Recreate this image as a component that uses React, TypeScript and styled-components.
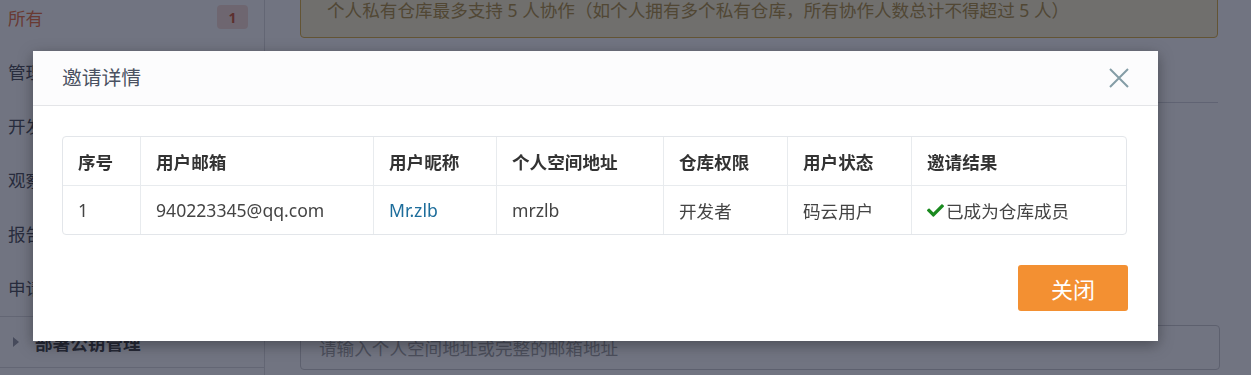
import React from "react";
import styled, { createGlobalStyle } from "styled-components";
import { FaCheck } from "react-icons/fa";

const GlobalStyle = createGlobalStyle`
  html, body { margin: 0; padding: 0; background: #ffffff; }
  body {
    font-family: "Noto Sans", "Noto Sans CJK SC", sans-serif;
    font-size: 17.6px;
    color: #333;
    overflow: hidden;
  }
  * { box-sizing: border-box; }
`;

const Page = styled.div`
  display: flex;
  width: 1251px;
  height: 375px;
  overflow: hidden;
`;

const Sidebar = styled.aside`
  width: 265px;
  flex: none;
  border-right: 1px solid #d8d8dc;
  display: flex;
  flex-direction: column;
  margin-top: -10px;
`;

const SideItem = styled.div<{ $active?: boolean }>`
  height: 54px;
  flex: none;
  display: flex;
  align-items: center;
  justify-content: space-between;
  padding: 0 16px 0 8px;
  font-size: 17.6px;
  color: ${(p) => (p.$active ? "#e8632b" : "#3a3d48")};
`;

const Badge = styled.span`
  width: 31px;
  height: 24px;
  border-radius: 4px;
  background: #f6d9d2;
  color: #c8461f;
  font-size: 14px;
  font-weight: 700;
  display: flex;
  align-items: center;
  justify-content: center;
`;

const SideSection = styled.div`
  height: 52px;
  flex: none;
  display: flex;
  align-items: center;
  gap: 16px;
  padding: 0 0 0 13px;
  border-top: 1px solid #d8d8dc;
  border-bottom: 1px solid #d8d8dc;
  margin-top: 2px;
  font-weight: 700;
  color: #333;
  font-size: 17.6px;
`;

const Caret = styled.span`
  width: 0;
  height: 0;
  border-top: 5px solid transparent;
  border-bottom: 5px solid transparent;
  border-left: 6px solid #8a8d98;
`;

const Main = styled.main`
  flex: 1;
  display: flex;
  flex-direction: column;
  padding: 0 31px 0 35px;
`;

const Warning = styled.div`
  margin: -4px 2px 0 0;
  padding: 3px 26px 16px;
  line-height: 21px;
  background: #fbf1c8;
  border: 1px solid #d9a830;
  border-radius: 4px;
  color: #a8862e;
  font-size: 17.6px;
`;

const Rule = styled.div`
  height: 1px;
  background: #d0d2d8;
  margin: 64px 2px 0 0;
`;

const Input = styled.input`
  margin-top: 222px;
  height: 45px;
  border: 1px solid #c8c8cc;
  border-radius: 4px;
  padding: 0 18px;
  font-family: inherit;
  font-size: 17.6px;
  color: #333;
  background: #fff;
  outline: none;
  &::placeholder { color: #9a9a9a; }
`;

const Overlay = styled.div`
  position: fixed;
  inset: 0;
  background: rgba(30, 35, 55, 0.63);
  padding: 51px 0 0 33px;
`;

const Modal = styled.div`
  width: 1125px;
  background: #fff;
  box-shadow: 0 4px 14px rgba(0, 0, 0, 0.35);
  display: flex;
  flex-direction: column;
`;

const ModalHeader = styled.div`
  height: 55px;
  background: #fcfcfd;
  border-bottom: 1px solid #e4e5e8;
  display: flex;
  align-items: center;
  justify-content: space-between;
  padding: 0 29px;
`;

const Title = styled.h3`
  margin: 0;
  font-weight: 400;
  font-size: 19.8px;
  color: #4a5161;
  line-height: 1;
`;

const CloseX = styled.button`
  width: 20px;
  height: 20px;
  border: 0;
  padding: 0;
  background: transparent;
  display: flex;
  cursor: pointer;
`;

const ModalBody = styled.div`
  padding: 30px 31px 0 29px;
`;

const TableWrap = styled.div`
  border: 1px solid #e3e6ea;
  border-radius: 4px;
  display: grid;
  grid-template-columns: 77px 233px 123px 167px 124px 124px 1fr;
  overflow: hidden;
`;

const Cell = styled.div<{ $head?: boolean; $first?: boolean; $link?: boolean }>`
  height: ${(p) => (p.$head ? "49px" : "48px")};
  border-left: ${(p) => (p.$first ? "0" : "1px solid #e8ebee")};
  border-bottom: ${(p) => (p.$head ? "1px solid #e8ebee" : "0")};
  padding: 0 0 0 15px;
  display: flex;
  align-items: center;
  gap: 2px;
  font-size: 17.6px;
  font-weight: ${(p) => (p.$head ? 700 : 400)};
  color: ${(p) => (p.$head ? "#333" : p.$link ? "#1d6d9b" : "#444")};
  white-space: nowrap;
`;

const Check = styled(FaCheck)`
  color: #1a8a1f;
  width: 17px;
  height: 17px;
`;

const ModalFooter = styled.div`
  display: flex;
  justify-content: flex-end;
  padding: 30px 30px 30px;
`;

const CloseButton = styled.button`
  width: 110px;
  height: 46px;
  border: 0;
  border-radius: 3px;
  background: #f39032;
  color: #fff;
  font-family: inherit;
  font-size: 22px;
  cursor: pointer;
`;

const headers = ["序号", "用户邮箱", "用户昵称", "个人空间地址", "仓库权限", "用户状态", "邀请结果"];

export default function App() {
  return (
    <>
      <GlobalStyle />
      <Page>
        <Sidebar>
          <SideItem $active>
            所有<Badge>1</Badge>
          </SideItem>
          <SideItem>管理</SideItem>
          <SideItem>开发</SideItem>
          <SideItem>观察</SideItem>
          <SideItem>报告</SideItem>
          <SideItem>申请</SideItem>
          <SideSection>
            <Caret />
            部署公钥管理
          </SideSection>
        </Sidebar>
        <Main>
          <Warning>个人私有仓库最多支持 5 人协作（如个人拥有多个私有仓库，所有协作人数总计不得超过 5 人）</Warning>
          <Rule />
          <Input placeholder="请输入个人空间地址或完整的邮箱地址" />
        </Main>
      </Page>
      <Overlay>
        <Modal>
          <ModalHeader>
            <Title>邀请详情</Title>
            <CloseX aria-label="关闭">
              <svg width="20" height="20" viewBox="0 0 20 20">
                <path d="M1 1 L19 19 M19 1 L1 19" stroke="#849da6" strokeWidth="2" fill="none" />
              </svg>
            </CloseX>
          </ModalHeader>
          <ModalBody>
            <TableWrap>
              {headers.map((h, i) => (
                <Cell key={h} $head $first={i === 0}>
                  {h}
                </Cell>
              ))}
              <Cell $first>1</Cell>
              <Cell>940223345@qq.com</Cell>
              <Cell $link>Mr.zlb</Cell>
              <Cell>mrzlb</Cell>
              <Cell>开发者</Cell>
              <Cell>码云用户</Cell>
              <Cell>
                <Check />
                已成为仓库成员
              </Cell>
            </TableWrap>
          </ModalBody>
          <ModalFooter>
            <CloseButton>关闭</CloseButton>
          </ModalFooter>
        </Modal>
      </Overlay>
    </>
  );
}
